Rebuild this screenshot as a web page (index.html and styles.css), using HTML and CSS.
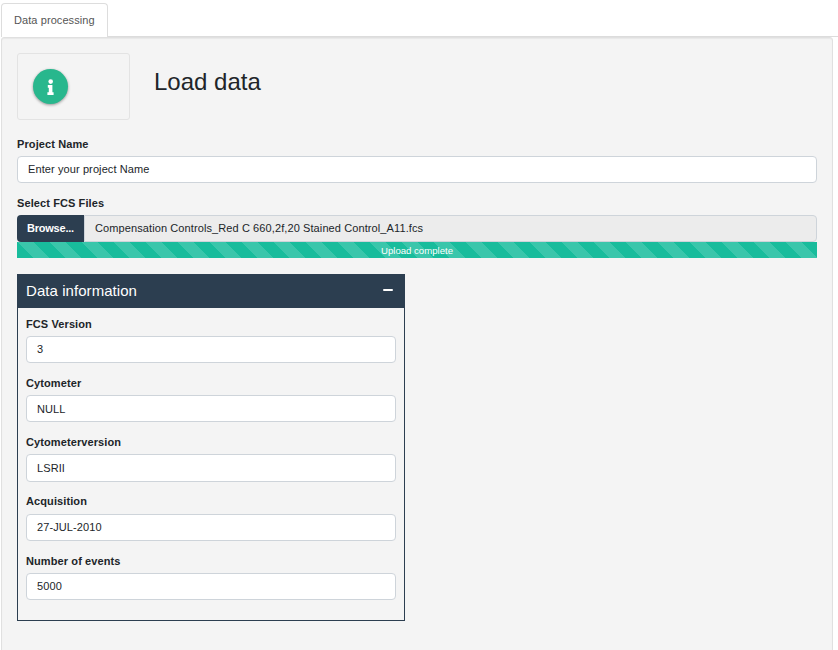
FILE: index.html
```html
<!DOCTYPE html>
<html lang="en">
<head>
<meta charset="utf-8">
<title>Data processing</title>
<link rel="stylesheet" href="styles.css">
</head>
<body>
<nav class="tabs"><a class="tab">Data processing</a></nav>
<main class="well">
  <header class="heading">
    <div class="info-box">
      <span class="info-button"><svg width="7" height="16" viewBox="0 0 7 16"><circle cx="3.7" cy="2.6" r="2.3" fill="#fff"/><path fill="#fff" d="M.8 6h4.6v7.2h1.2V16H.4v-2.8h1.4V8.7h-1z"/></svg></span>
    </div>
    <h2>Load data</h2>
  </header>
  <div class="group project"><label>Project Name</label><div class="field">Enter your project Name</div></div>
  <div class="upload">
    <label>Select FCS Files</label>
    <div class="file"><span class="browse">Browse...</span><span class="filename">Compensation Controls_Red C 660,2f,20 Stained Control_A11.fcs</span></div>
    <div class="progress">Upload complete</div>
  </div>
  <section class="card">
    <div class="card-head"><h3>Data information</h3><span class="minus"></span></div>
    <div class="card-body">
      <div class="group"><label>FCS Version</label><div class="field">3</div></div>
      <div class="group"><label>Cytometer</label><div class="field">NULL</div></div>
      <div class="group"><label>Cytometerversion</label><div class="field">LSRII</div></div>
      <div class="group"><label>Acquisition</label><div class="field">27-JUL-2010</div></div>
      <div class="group"><label>Number of events</label><div class="field">5000</div></div>
    </div>
  </section>
</main>
</body>
</html>
```
FILE: styles.css
```css
* { box-sizing: border-box; }
body { margin: 0; height: 650px; overflow: hidden; background: #fff; color: #212529; font: 11px/17px "Liberation Sans", Arial, sans-serif; }
.tabs { display: flex; height: 37px; margin: 0 0 0 1px; padding-top: 3px; border-bottom: 1px solid #dcdcdc; }
.tab { height: 34px; width: 107px; padding: 8px 0 0 12px; color: #555; background: #fff; border: 1px solid #ddd; border-bottom: 0; border-radius: 4px 4px 0 0; letter-spacing: .08px; }
.well { width: 832px; height: 640px; margin-left: 1px; padding: 15px; background: #f4f4f4; border: 1px solid #e0e0e0; border-radius: 3px; box-shadow: inset 0 1px 1px rgba(0,0,0,.05); }
.heading { display: flex; height: 82px; }
.info-box { width: 113px; height: 67px; padding: 15px; border: 1px solid #e3e3e3; border-radius: 3px; }
.info-button { display: flex; align-items: center; justify-content: center; width: 35px; height: 35px; border-radius: 50%; background: #28b78d; box-shadow: 0 1px 3px rgba(0,0,0,.4); }
h2 { margin: 14px 0 0 24px; font-size: 24px; line-height: 29px; font-weight: 400; }
label { display: block; height: 20.2px; margin-top: -.2px; font-weight: 700; letter-spacing: .1px; }
.group { display: flow-root; height: 59.2px; }
.project { height: 59px; }
.project label, .upload label { height: 21px; margin-top: 0; line-height: 19px; }
.field { height: 27.2px; padding: 4.4px 10px 0; background: #fff; border: 1px solid #ced4da; border-radius: 4px; letter-spacing: .1px; }
.file { display: flex; height: 27px; }
.browse { width: 67px; padding: 5px 0 0 10px; background: #2c3e50; color: #fff; font-weight: 700; border-radius: 4px 0 0 4px; letter-spacing: -.22px; }
.filename { flex: 1; padding: 4px 10px; background: #ececec; border: 1px solid #ced4da; border-radius: 0 4px 4px 0; letter-spacing: .1px; }
.progress { height: 16px; color: #fff; font-size: 9.6px; line-height: 18px; text-align: center; background: #18bc9c linear-gradient(45deg, rgba(255,255,255,.15) 25%, transparent 25%, transparent 50%, rgba(255,255,255,.15) 50%, rgba(255,255,255,.15) 75%, transparent 75%) 0 0/32px 32px; }
.card { width: 388px; height: 347px; margin-top: 16px; border: 1px solid #2c3e50; }
.card-head { display: flex; justify-content: space-between; height: 33px; padding: 0 11px 0 8px; background: #2c3e50; color: #fff; }
h3 { margin: 6px 0 0; font-size: 15px; line-height: 20px; font-weight: 400; letter-spacing: .06px; }
.minus { width: 10px; height: 2px; margin-top: 14px; background: #fff; border-radius: 1px; }
.card-body { padding: 8px; }
```
